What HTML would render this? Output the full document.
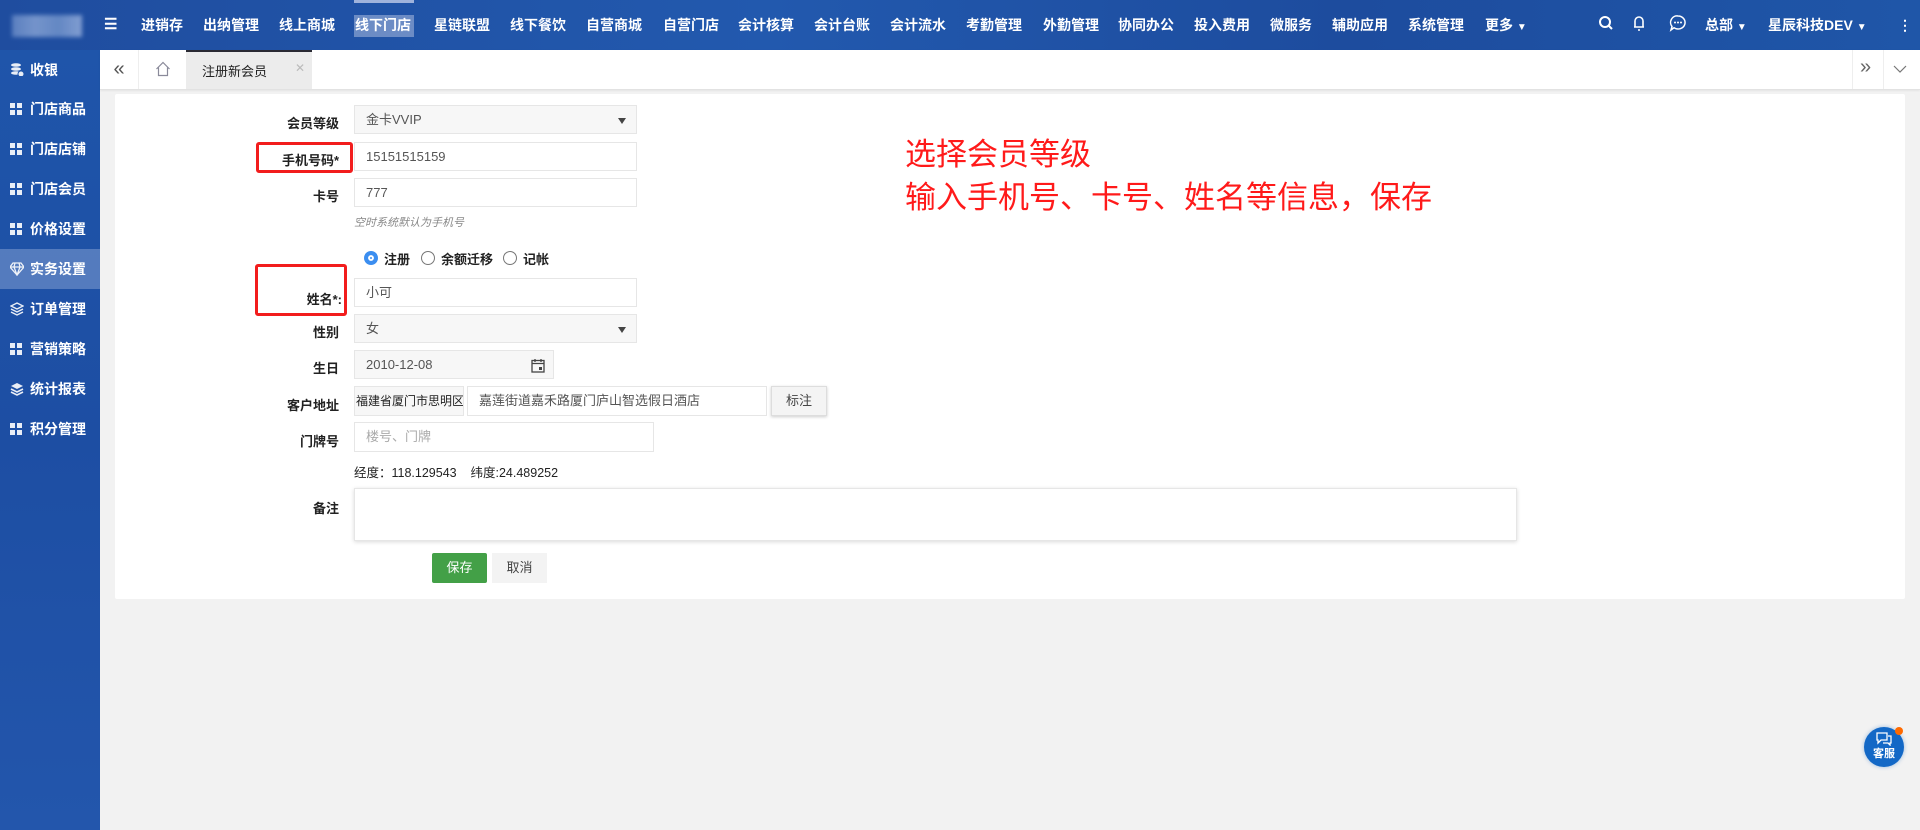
<!DOCTYPE html>
<html><head><meta charset="utf-8">
<style>
*{margin:0;padding:0;box-sizing:border-box}
body{width:1920px;height:830px;position:relative;overflow:hidden;background:#f2f2f2;font-family:"Liberation Sans","Noto Sans CJK SC",sans-serif;font-size:13px;color:#333}
.abs{position:absolute}
#top{left:0;top:0;width:1920px;height:50px;background:linear-gradient(90deg,#1f4d9f,#2259ae 40%,#1d4c9e 70%,#1f56a8);}
.nav{position:absolute;top:16px;color:#fff;font-weight:bold;font-size:14px;line-height:18px;white-space:nowrap}
#side{left:0;top:50px;width:100px;height:780px;background:linear-gradient(180deg,#1f55aa,#1d4ea3 50%,#2356ac)}
.si{position:absolute;left:0;width:100px;height:40px;color:#fff;font-size:14px;font-weight:bold;line-height:40px;padding-left:30px}
.si i{position:absolute;left:10px;top:14px;width:12px;height:12px;border:2px solid #fff;border-width:0;background:
 linear-gradient(#fff,#fff) 0 0/5px 5px no-repeat,linear-gradient(#fff,#fff) 0 7px/5px 5px no-repeat,linear-gradient(#fff,#fff) 7px 7px/5px 5px no-repeat,linear-gradient(#fff,#fff) 7px 0/5px 5px no-repeat;opacity:.9}
#tabs{left:100px;top:50px;width:1820px;height:40px;background:#fff;border-bottom:1px solid #e2e2e2;box-shadow:0 1px 2px rgba(0,0,0,.06)}
#card{left:115px;top:94px;width:1790px;height:505px;background:#fff;border-radius:2px}
.lb{position:absolute;right:1581px;font-weight:bold;color:#222;font-size:13px;text-align:right;white-space:nowrap}
.in{position:absolute;border:1px solid #e6e6e6;background:#fff;height:30px;line-height:28px;padding-left:11px;color:#555;font-size:13px;white-space:nowrap;overflow:hidden}
.gray{background:#f7f7f7}
.tri{position:absolute;right:10px;top:12px;width:0;height:0;border-left:4px solid transparent;border-right:4px solid transparent;border-top:6px solid #444}
.red{position:absolute;border:3px solid #f21d1d;border-radius:3px}
.rad{position:absolute;top:251px;width:14px;height:14px;border:1.5px solid #777;border-radius:50%}
.rt{position:absolute;top:249px;font-weight:bold;color:#222}
</style></head><body>
<div id="top" class="abs">
  <div class="abs" style="left:12px;top:15px;width:70px;height:22px;background:linear-gradient(90deg,#6a8cc8,#8aa6d6,#7596cd,#9ab2de);opacity:.8;filter:blur(2px)"></div>
  <div class="nav" style="left:104px;font-size:15px">☰</div>
  <div class="abs" style="left:354px;top:0;width:60px;height:3px;background:#9fb3dc"></div>
  <div class="abs" style="left:354px;top:15px;width:60px;height:22px;background:rgba(200,210,235,.45)"></div>
  <div class="nav" style="left:141px">进销存</div>
  <div class="nav" style="left:203px">出纳管理</div>
  <div class="nav" style="left:279px">线上商城</div>
  <div class="nav" style="left:355px">线下门店</div>
  <div class="nav" style="left:434px">星链联盟</div>
  <div class="nav" style="left:510px">线下餐饮</div>
  <div class="nav" style="left:586px">自营商城</div>
  <div class="nav" style="left:663px">自营门店</div>
  <div class="nav" style="left:738px">会计核算</div>
  <div class="nav" style="left:814px">会计台账</div>
  <div class="nav" style="left:890px">会计流水</div>
  <div class="nav" style="left:966px">考勤管理</div>
  <div class="nav" style="left:1043px">外勤管理</div>
  <div class="nav" style="left:1118px">协同办公</div>
  <div class="nav" style="left:1194px">投入费用</div>
  <div class="nav" style="left:1270px">微服务</div>
  <div class="nav" style="left:1332px">辅助应用</div>
  <div class="nav" style="left:1408px">系统管理</div>
  <div class="nav" style="left:1485px">更多 <span style="font-size:10px">▼</span></div>
  <svg class="abs" style="left:1598px;top:15px" width="16" height="16" viewBox="0 0 16 16"><circle cx="7" cy="7" r="5" fill="none" stroke="#fff" stroke-width="2"/><path d="M10.5 10.5L14 14" stroke="#fff" stroke-width="2"/></svg>
  <svg class="abs" style="left:1632px;top:14px" width="14" height="18" viewBox="0 0 14 18"><path d="M3 13V7a4 4 0 0 1 8 0v6H2h10M6 16h2" fill="none" stroke="#fff" stroke-width="1.6"/></svg>
  <svg class="abs" style="left:1669px;top:14px" width="18" height="18" viewBox="0 0 18 18"><path d="M9 2a7 6.5 0 1 1-4 11.8L2 16l1-3.5A6.5 6.5 0 0 1 9 2z" fill="none" stroke="#fff" stroke-width="1.5"/><circle cx="6" cy="8.5" r="1" fill="#fff"/><circle cx="9" cy="8.5" r="1" fill="#fff"/><circle cx="12" cy="8.5" r="1" fill="#fff"/></svg>
  <div class="nav" style="left:1705px">总部 <span style="font-size:10px">▼</span></div>
  <div class="nav" style="left:1768px">星辰科技DEV <span style="font-size:10px">▼</span></div>
  <div class="nav" style="left:1898px">⋮</div>
</div>
<div id="side" class="abs">
  <div class="si" style="top:0"><i style="background:none;border:0"><svg width="14" height="14" viewBox="0 0 14 14" style="position:absolute;left:0;top:-2px"><ellipse cx="6" cy="3" rx="5" ry="1.8" fill="#fff"/><ellipse cx="6" cy="7" rx="5" ry="1.8" fill="#fff"/><ellipse cx="6" cy="11" rx="5" ry="1.8" fill="#fff"/><circle cx="11" cy="12" r="3" fill="#fff" stroke="#2056ab"/></svg></i>收银</div>
  <div class="si" style="top:39px"><i></i>门店商品</div>
  <div class="si" style="top:79px"><i></i>门店店铺</div>
  <div class="si" style="top:119px"><i></i>门店会员</div>
  <div class="si" style="top:159px"><i></i>价格设置</div>
  <div class="si" style="top:199px;background:rgba(150,175,220,.45)"><i style="background:none;border:0"><svg width="14" height="14" viewBox="0 0 14 14" style="position:absolute;left:0;top:-1px"><path d="M3 1h8l3 4-7 8-7-8z M0 5h14 M5 1L4 5l3 8 3-8-1-4" fill="none" stroke="#fff" stroke-width="1.3"/></svg></i>实务设置</div>
  <div class="si" style="top:239px"><i style="background:none;border:0"><svg width="14" height="14" viewBox="0 0 14 14" style="position:absolute;left:0;top:-1px"><path d="M7 1l6 3-6 3-6-3z M1 7l6 3 6-3 M1 10l6 3 6-3" fill="none" stroke="#fff" stroke-width="1.4"/></svg></i>订单管理</div>
  <div class="si" style="top:279px"><i></i>营销策略</div>
  <div class="si" style="top:319px"><i style="background:none;border:0"><svg width="14" height="14" viewBox="0 0 14 14" style="position:absolute;left:0;top:-1px"><path d="M7 1l6 3-6 3-6-3z" fill="#fff"/><path d="M1 7l6 3 6-3 M1 10l6 3 6-3" fill="none" stroke="#fff" stroke-width="1.6"/></svg></i>统计报表</div>
  <div class="si" style="top:359px"><i></i>积分管理</div>
</div>
<div id="tabs" class="abs">
  <div class="abs" style="left:0;top:0;width:39px;height:39px;border-right:1px solid #eee;text-align:center;line-height:38px;font-size:20px;color:#555">«</div>
  <svg class="abs" style="left:55px;top:11px" width="16" height="16" viewBox="0 0 16 16"><path d="M1.5 8L8 1.5 14.5 8M3.5 6.5V14.5h9V6.5" fill="none" stroke="#8a8a9a" stroke-width="1.2"/></svg>
  <div class="abs" style="left:86px;top:0;width:126px;height:39px;background:#ececec;border-top:2px solid #2a2a33"></div>
  <div class="abs" style="left:102px;top:11px;font-size:13px;color:#222">注册新会员</div>
  <div class="abs" style="left:195px;top:11px;font-size:12px;color:#bbb">✕</div>
  <div class="abs" style="left:1752px;top:0;width:1px;height:39px;background:#eee"></div>
  <div class="abs" style="left:1783px;top:0;width:1px;height:39px;background:#eee"></div>
  <div class="abs" style="left:1760px;top:6px;font-size:20px;color:#666">»</div>
  <svg class="abs" style="left:1793px;top:15px" width="14" height="9" viewBox="0 0 14 9"><path d="M1 1l6 6 6-6" fill="none" stroke="#777" stroke-width="1.2"/></svg>
</div>
<div id="card" class="abs"></div>

<div class="lb" style="top:113px">会员等级</div>
<div class="in gray" style="left:354px;top:105px;width:283px;height:29px">金卡VVIP<div class="tri"></div></div>
<div class="red" style="left:256px;top:142px;width:97px;height:31px"></div>
<div class="lb" style="top:150px">手机号码*</div>
<div class="in" style="left:354px;top:142px;width:283px;height:29px">15151515159</div>
<div class="lb" style="top:186px">卡号</div>
<div class="in" style="left:354px;top:178px;width:283px;height:29px">777</div>
<div class="abs" style="left:354px;top:214px;font-size:11px;font-style:italic;color:#888">空时系统默认为手机号</div>

<div class="rad" style="left:364px;border:4px solid #3b8ef0;background:#3b8ef0;box-shadow:inset 0 0 0 2px #fff"></div>
<div class="rt" style="left:384px">注册</div>
<div class="rad" style="left:421px"></div>
<div class="rt" style="left:441px">余额迁移</div>
<div class="rad" style="left:503px"></div>
<div class="rt" style="left:523px">记帐</div>

<div class="red" style="left:255px;top:264px;width:92px;height:52px"></div>
<div class="lb" style="top:289px;right:1578px">姓名*:</div>
<div class="in" style="left:354px;top:278px;width:283px;height:29px">小可</div>
<div class="lb" style="top:322px">性别</div>
<div class="in gray" style="left:354px;top:314px;width:283px;height:29px">女<div class="tri"></div></div>
<div class="lb" style="top:358px">生日</div>
<div class="in gray" style="left:354px;top:350px;width:200px;height:29px">2010-12-08
 <svg style="position:absolute;right:8px;top:7px" width="14" height="15" viewBox="0 0 14 15"><rect x="1" y="2.5" width="12" height="11.5" fill="none" stroke="#444" stroke-width="1.3"/><path d="M1 5.5h12M4 1v3M10 1v3" stroke="#444" stroke-width="1.3"/><rect x="8" y="9" width="3" height="3" fill="#444"/></svg></div>
<div class="lb" style="top:395px">客户地址</div>
<div class="in gray" style="left:354px;top:386px;width:110px;height:30px;padding-left:1px;color:#222;font-size:12px">福建省厦门市思明区</div>
<div class="in" style="left:467px;top:386px;width:300px;height:30px;padding-left:11px">嘉莲街道嘉禾路厦门庐山智选假日酒店</div>
<div class="abs" style="left:771px;top:386px;width:56px;height:30px;background:#f4f4f4;border:1px solid #ddd;box-shadow:0 1px 3px rgba(0,0,0,.2);text-align:center;line-height:28px;color:#444">标注</div>
<div class="lb" style="top:431px">门牌号</div>
<div class="in" style="left:354px;top:422px;width:300px;height:30px;color:#aaa">楼号、门牌</div>
<div class="abs" style="left:354px;top:462px;color:#222;font-size:12.5px">经度：118.129543 &nbsp;&nbsp;&nbsp;纬度:24.489252</div>
<div class="lb" style="top:498px">备注</div>
<div class="abs" style="left:354px;top:488px;width:1163px;height:53px;border:1px solid #e6e6e6;box-shadow:0 1px 4px rgba(0,0,0,.15);background:#fff"></div>
<div class="abs" style="left:432px;top:553px;width:55px;height:30px;background:#43a047;border-radius:2px;color:#fff;text-align:center;line-height:30px">保存</div>
<div class="abs" style="left:492px;top:553px;width:55px;height:30px;background:#f3f3f3;color:#444;text-align:center;line-height:30px">取消</div>

<div class="abs" style="left:905px;top:133px;color:#ff1a1a;font-size:31px;line-height:43px;white-space:nowrap">选择会员等级<br>输入手机号、卡号、姓名等信息，保存</div>

<div class="abs" style="left:1864px;top:727px;width:40px;height:40px;border-radius:50%;background:#1368c6;box-shadow:0 0 4px rgba(19,104,198,.4);color:#fff;font-size:11px;font-weight:bold;text-align:center;padding-top:20px;line-height:14px">客服
 <svg style="position:absolute;left:12px;top:5px" width="16" height="14" viewBox="0 0 16 14"><path d="M1 1h10v7H5l-3 3V8H1z M12 4h3v7h-1v2l-2-2H7" fill="none" stroke="#fff" stroke-width="1.3"/></svg></div>
<div class="abs" style="left:1895px;top:727px;width:8px;height:8px;border-radius:50%;background:#ff6a00"></div>
</body></html>
